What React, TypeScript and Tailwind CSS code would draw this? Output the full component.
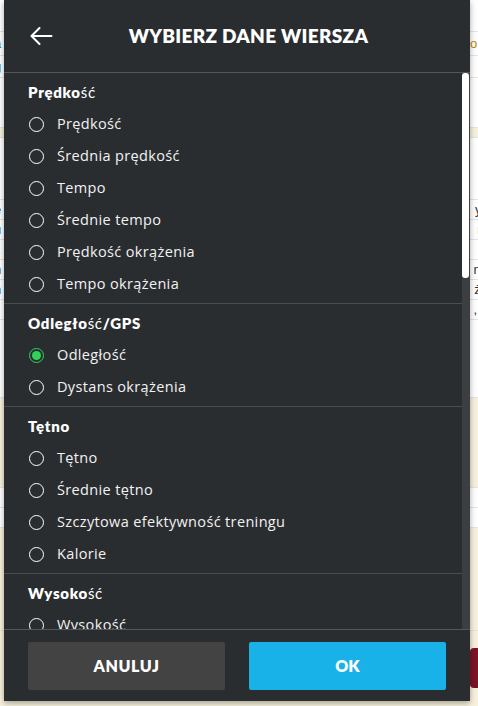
type Section = { title: React.ReactNode; items: string[] };

const B = ({ children }: { children: React.ReactNode }) => (
  <span className="font-extrabold">{children}</span>
);

const sections: Section[] = [
  {
    title: (
      <>
        <B>Prędko</B>ść
      </>
    ),
    items: ["Prędkość", "Średnia prędkość", "Tempo", "Średnie tempo", "Prędkość okrążenia", "Tempo okrążenia"],
  },
  {
    title: (
      <>
        <B>Odległo</B>ść<B>/GPS</B>
      </>
    ),
    items: ["Odległość", "Dystans okrążenia"],
  },
  {
    title: <B>Tętno</B>,
    items: ["Tętno", "Średnie tętno", "Szczytowa efektywność treningu", "Kalorie"],
  },
  {
    title: (
      <>
        <B>Wysoko</B>ść
      </>
    ),
    items: ["Wysokość", "Średnia wysokość"],
  },
];

function Radio({ checked }: { checked: boolean }) {
  if (checked) {
    return (
      <span className="flex h-[15px] w-[15px] shrink-0 items-center justify-center rounded-full border-[1.5px] border-[#2fd35a]">
        <span className="h-[9px] w-[9px] rounded-full bg-[#2fd35a]" />
      </span>
    );
  }
  return <span className="h-[15px] w-[15px] shrink-0 rounded-full border-[1.5px] border-white" />;
}

// page behind the dialog, only the edges show
function Backdrop() {
  const rows: { h: string; bg: string; l: string; r: string; lc: string; rc: string }[] = [
    { h: "h-[32px]", bg: "bg-white", l: "", r: "", lc: "", rc: "" },
    { h: "h-[24px]", bg: "bg-white", l: "a", r: "o 7", lc: "text-[#1a6fb4]", rc: "text-[#b8860b]" },
    { h: "h-[22px]", bg: "bg-white", l: "g", r: "", lc: "text-[#1a6fb4]", rc: "" },
    { h: "h-[50px]", bg: "bg-white", l: "", r: "", lc: "", rc: "" },
    { h: "h-[10px]", bg: "bg-[#f7f1dc]", l: "", r: "", lc: "", rc: "" },
    { h: "h-[62px]", bg: "bg-white", l: "", r: "", lc: "", rc: "" },
    { h: "h-[20px]", bg: "bg-white", l: "e", r: "ys", lc: "text-[#1a6fb4]", rc: "text-[#333]" },
    { h: "h-[20px]", bg: "bg-white", l: "u", r: "rz", lc: "text-[#1a6fb4]", rc: "text-[#333]" },
    { h: "h-[20px]", bg: "bg-white", l: "z", r: " p", lc: "text-[#333]", rc: "text-[#1a6fb4]" },
    { h: "h-[20px]", bg: "bg-white", l: "n", r: "nu", lc: "text-[#333]", rc: "text-[#333]" },
    { h: "h-[20px]", bg: "bg-white", l: "n", r: "że", lc: "text-[#1a6fb4]", rc: "text-[#333]" },
    { h: "h-[20px]", bg: "bg-white", l: "r", r: ", a", lc: "text-[#333]", rc: "text-[#333]" },
    { h: "h-[78px]", bg: "bg-white", l: "", r: "", lc: "", rc: "" },
    { h: "h-[90px]", bg: "bg-[#f7f1dc]", l: "", r: "", lc: "", rc: "" },
    { h: "h-[20px]", bg: "bg-white", l: "r", r: "vi", lc: "text-[#1a6fb4]", rc: "text-[#1a6fb4]" },
    { h: "h-[20px]", bg: "bg-white", l: "r", r: "", lc: "text-[#1a6fb4]", rc: "" },
    { h: "h-[103px]", bg: "bg-[#f7f1dc]", l: "", r: "", lc: "", rc: "" },
  ];
  return (
    <div className="h-[706px] w-[478px] overflow-hidden bg-[#f7f1dc] font-['Liberation_Sans',sans-serif] text-[13px]">
      {rows.map((r, i) => (
        <div key={i} className={`${r.h} ${r.bg} flex items-center justify-between border-b border-[#e4e4e4]`}>
          <span className={`-ml-[6px] ${r.lc}`}>{r.l}</span>
          <span className={`-mr-[10px] ${r.rc}`}>{r.r}</span>
        </div>
      ))}
    </div>
  );
}

export default function App() {
  return (
    <div className="relative h-[706px] w-[478px] overflow-hidden">
      <Backdrop />
      <div className="absolute left-[470px] top-[648px] h-[40px] w-[20px] rounded-l-[4px] bg-[#7d1328]" />

      <div className="absolute left-[4px] top-0 flex h-[701px] w-[466px] flex-col bg-[#2a2d30] font-['Lato',sans-serif] text-white shadow-[0_2px_6px_rgba(0,0,0,0.35)]">
        {/* header */}
        <div className="flex h-[73px] shrink-0 items-center border-b border-[#55585b] pl-[26px] pr-[24px]">
          <svg width="23" height="18" viewBox="0 0 23 18" fill="none" stroke="white" strokeWidth="2" strokeLinecap="round" strokeLinejoin="round" className="shrink-0">
            <path d="M1.5 9H21.5M9.5 1L1.5 9L9.5 17" />
          </svg>
          <h1 className="flex-1 pr-[2px] text-center text-[19px] font-extrabold tracking-[0.3px]">
            WYBIERZ DANE WIERSZA
          </h1>
        </div>

        {/* list */}
        <div className="flex min-h-0 flex-1">
          <div className="min-w-0 flex-1 overflow-hidden">
            {sections.map((s, i) => (
              <div key={i} className="border-b border-[#4a4d50] pb-[3px] pt-[3px]">
                <div className="flex h-[32px] items-center pt-[1px] pl-[24px] text-[15px] leading-none tracking-[0.7px]">{s.title}</div>
                {s.items.map((it, j) => (
                  <div key={j} className="flex h-[32px] items-center gap-[13px] pl-[25px] font-['Open_Sans',sans-serif] text-[14.5px] tracking-[0.35px] text-[#f2f2f2]">
                    <Radio checked={i === 1 && j === 0} />
                    <span className="pb-[1px]">{it}</span>
                  </div>
                ))}
              </div>
            ))}
          </div>
          <div className="w-[8px] shrink-0 bg-[#3c3f42]">
            <div className="h-[205px] w-[7px] rounded-[3px] bg-white" />
          </div>
        </div>

        {/* footer */}
        <div className="flex h-[72px] shrink-0 gap-[24px] border-t border-[#55585b] px-[24px] pt-[12px]">
          <button className="h-[48px] flex-1 rounded-[2px] bg-[#434343] text-[16px] font-extrabold tracking-[0.6px] text-white">
            ANULUJ
          </button>
          <button className="h-[48px] flex-1 rounded-[2px] bg-[#18b2e9] text-[16px] font-extrabold text-white">
            OK
          </button>
        </div>
      </div>
    </div>
  );
}
